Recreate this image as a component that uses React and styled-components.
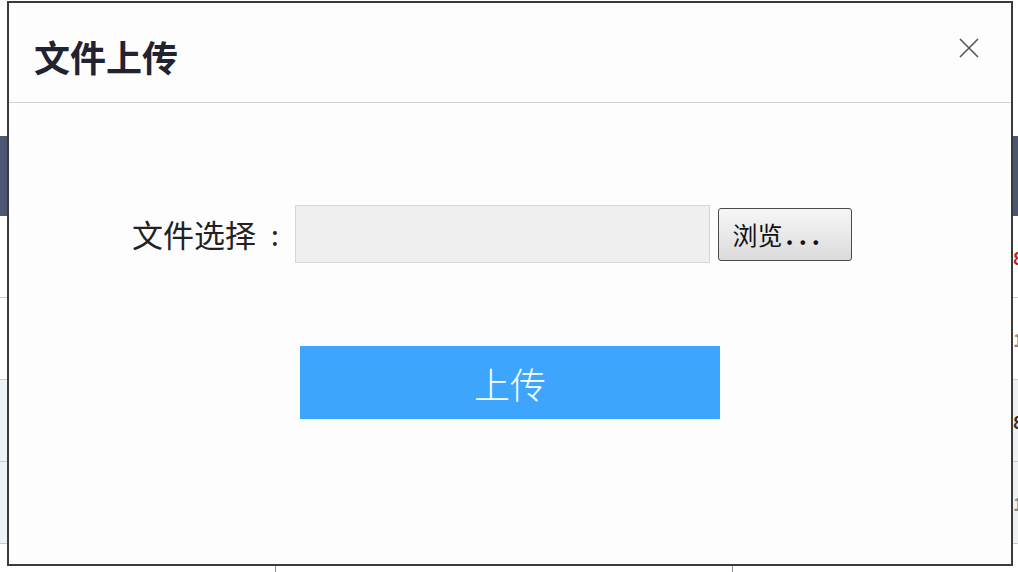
import React from "react";
import styled, { createGlobalStyle } from "styled-components";

const GlobalStyle = createGlobalStyle`
  html, body {
    margin: 0;
    padding: 0;
    background: #ffffff;
    font-family: "Noto Sans CJK SC", "Noto Sans", sans-serif;
  }
  * {
    box-sizing: border-box;
  }
`;

const rows = [
  { note: "8", tone: "red", shaded: false },
  { note: "1", tone: "gray", shaded: false },
  { note: "8", tone: "dark", shaded: true },
  { note: "1", tone: "gray", shaded: true },
  { note: "", tone: "gray", shaded: false },
];

const App = () => {
  return (
    <>
      <GlobalStyle />
      <Page>
        <TableHead>
          <HeadCell>序号</HeadCell>
          <HeadCell>文件名称</HeadCell>
          <HeadCell>状态</HeadCell>
        </TableHead>
        {rows.map((row, i) => (
          <TableRow key={i} $shaded={row.shaded}>
            <Cell />
            <Cell />
            <NoteCell $tone={row.tone}>{row.note}</NoteCell>
          </TableRow>
        ))}
      </Page>

      <Dialog>
        <DialogHeader>
          <Title>文件上传</Title>
          <CloseButton aria-label="关闭">
            <svg width="20" height="20" viewBox="0 0 20 20">
              <path
                d="M1 1 L19 19 M19 1 L1 19"
                stroke="#555"
                strokeWidth="1.6"
                fill="none"
              />
            </svg>
          </CloseButton>
        </DialogHeader>
        <DialogBody>
          <FormRow>
            <Label>
              文件选择<Colon>:</Colon>
            </Label>
            <FileInput />
            <BrowseButton>
              浏览<Dots>...</Dots>
            </BrowseButton>
          </FormRow>
          <UploadButton>上传</UploadButton>
        </DialogBody>
      </Dialog>
    </>
  );
};

export default App;

const Page = styled.div`
  padding-top: 136px;
  height: 572px;
  overflow: hidden;
`;

const TableHead = styled.div`
  display: grid;
  grid-template-columns: 276px 457px 1fr;
  height: 80px;
  background-color: #4a5672;
  align-items: center;
`;

const HeadCell = styled.div`
  color: #fff;
  font-weight: bold;
  font-size: 18px;
  padding-left: 40px;
`;

const TableRow = styled.div`
  display: grid;
  grid-template-columns: 276px 457px 1fr;
  height: 82px;
  border-bottom: 1px solid #c9ccd0;
  background-color: ${(p) => (p.$shaded ? "#eef1f5" : "#ffffff")};
`;

const Cell = styled.div`
  border-right: 1px solid #8a8a8a;
`;

const NoteCell = styled.div`
  display: flex;
  align-items: center;
  padding-left: 280px;
  font-size: 18px;
  font-weight: bold;
  color: ${(p) =>
    p.$tone === "red" ? "#c0201a" : p.$tone === "dark" ? "#3a2a1a" : "#888"};
`;

const Dialog = styled.div`
  position: fixed;
  top: 1px;
  left: 7px;
  width: 1006px;
  height: 565px;
  display: flex;
  flex-direction: column;
  border: 2px solid #3a3a3a;
  background-color: #fdfdfd;
`;

const DialogHeader = styled.div`
  display: flex;
  justify-content: space-between;
  align-items: flex-start;
  height: 100px;
  padding: 0 32px 0 25px;
  border-bottom: 1px solid #d3d3d3;
`;

const Title = styled.h2`
  margin: 0;
  padding-top: 27px;
  font-size: 36px;
  line-height: 52px;
  font-weight: bold;
  color: #222230;
`;

const CloseButton = styled.button`
  margin-top: 35px;
  padding: 0;
  width: 20px;
  height: 20px;
  border: none;
  background: none;
  cursor: pointer;
  display: flex;
`;

const DialogBody = styled.div`
  display: flex;
  flex-direction: column;
  padding-top: 102px;
`;

const FormRow = styled.div`
  display: flex;
  align-items: center;
  padding-left: 123px;
`;

const Label = styled.span`
  display: flex;
  align-items: center;
  font-size: 31px;
  line-height: 58px;
  color: #222;
  margin-right: 16px;
`;

const Colon = styled.span`
  margin-left: 15px;
  font-size: 28px;
`;

const FileInput = styled.div`
  width: 415px;
  height: 58px;
  border: 1px solid #d6d6d6;
  background-color: #efefef;
`;

const BrowseButton = styled.button`
  margin-left: 8px;
  width: 134px;
  height: 53px;
  border: 1px solid #4a4a4a;
  border-radius: 3px;
  background: linear-gradient(#f6f6f6, #e9e9e9 50%, #dadada);
  font-family: "Noto Sans CJK SC", sans-serif;
  font-size: 25px;
  color: #111;
  display: flex;
  align-items: center;
  justify-content: center;
  padding: 0 12px 0 0;
`;

const Dots = styled.span`
  letter-spacing: 5px;
  margin-left: 3px;
  font-weight: bold;
`;

const UploadButton = styled.button`
  align-self: center;
  margin-top: 83px;
  width: 420px;
  height: 73px;
  border: none;
  background-color: #3ea5fd;
  color: #fff;
  font-family: "Noto Sans CJK SC", sans-serif;
  font-size: 36px;
  font-weight: 300;
  cursor: pointer;
`;
